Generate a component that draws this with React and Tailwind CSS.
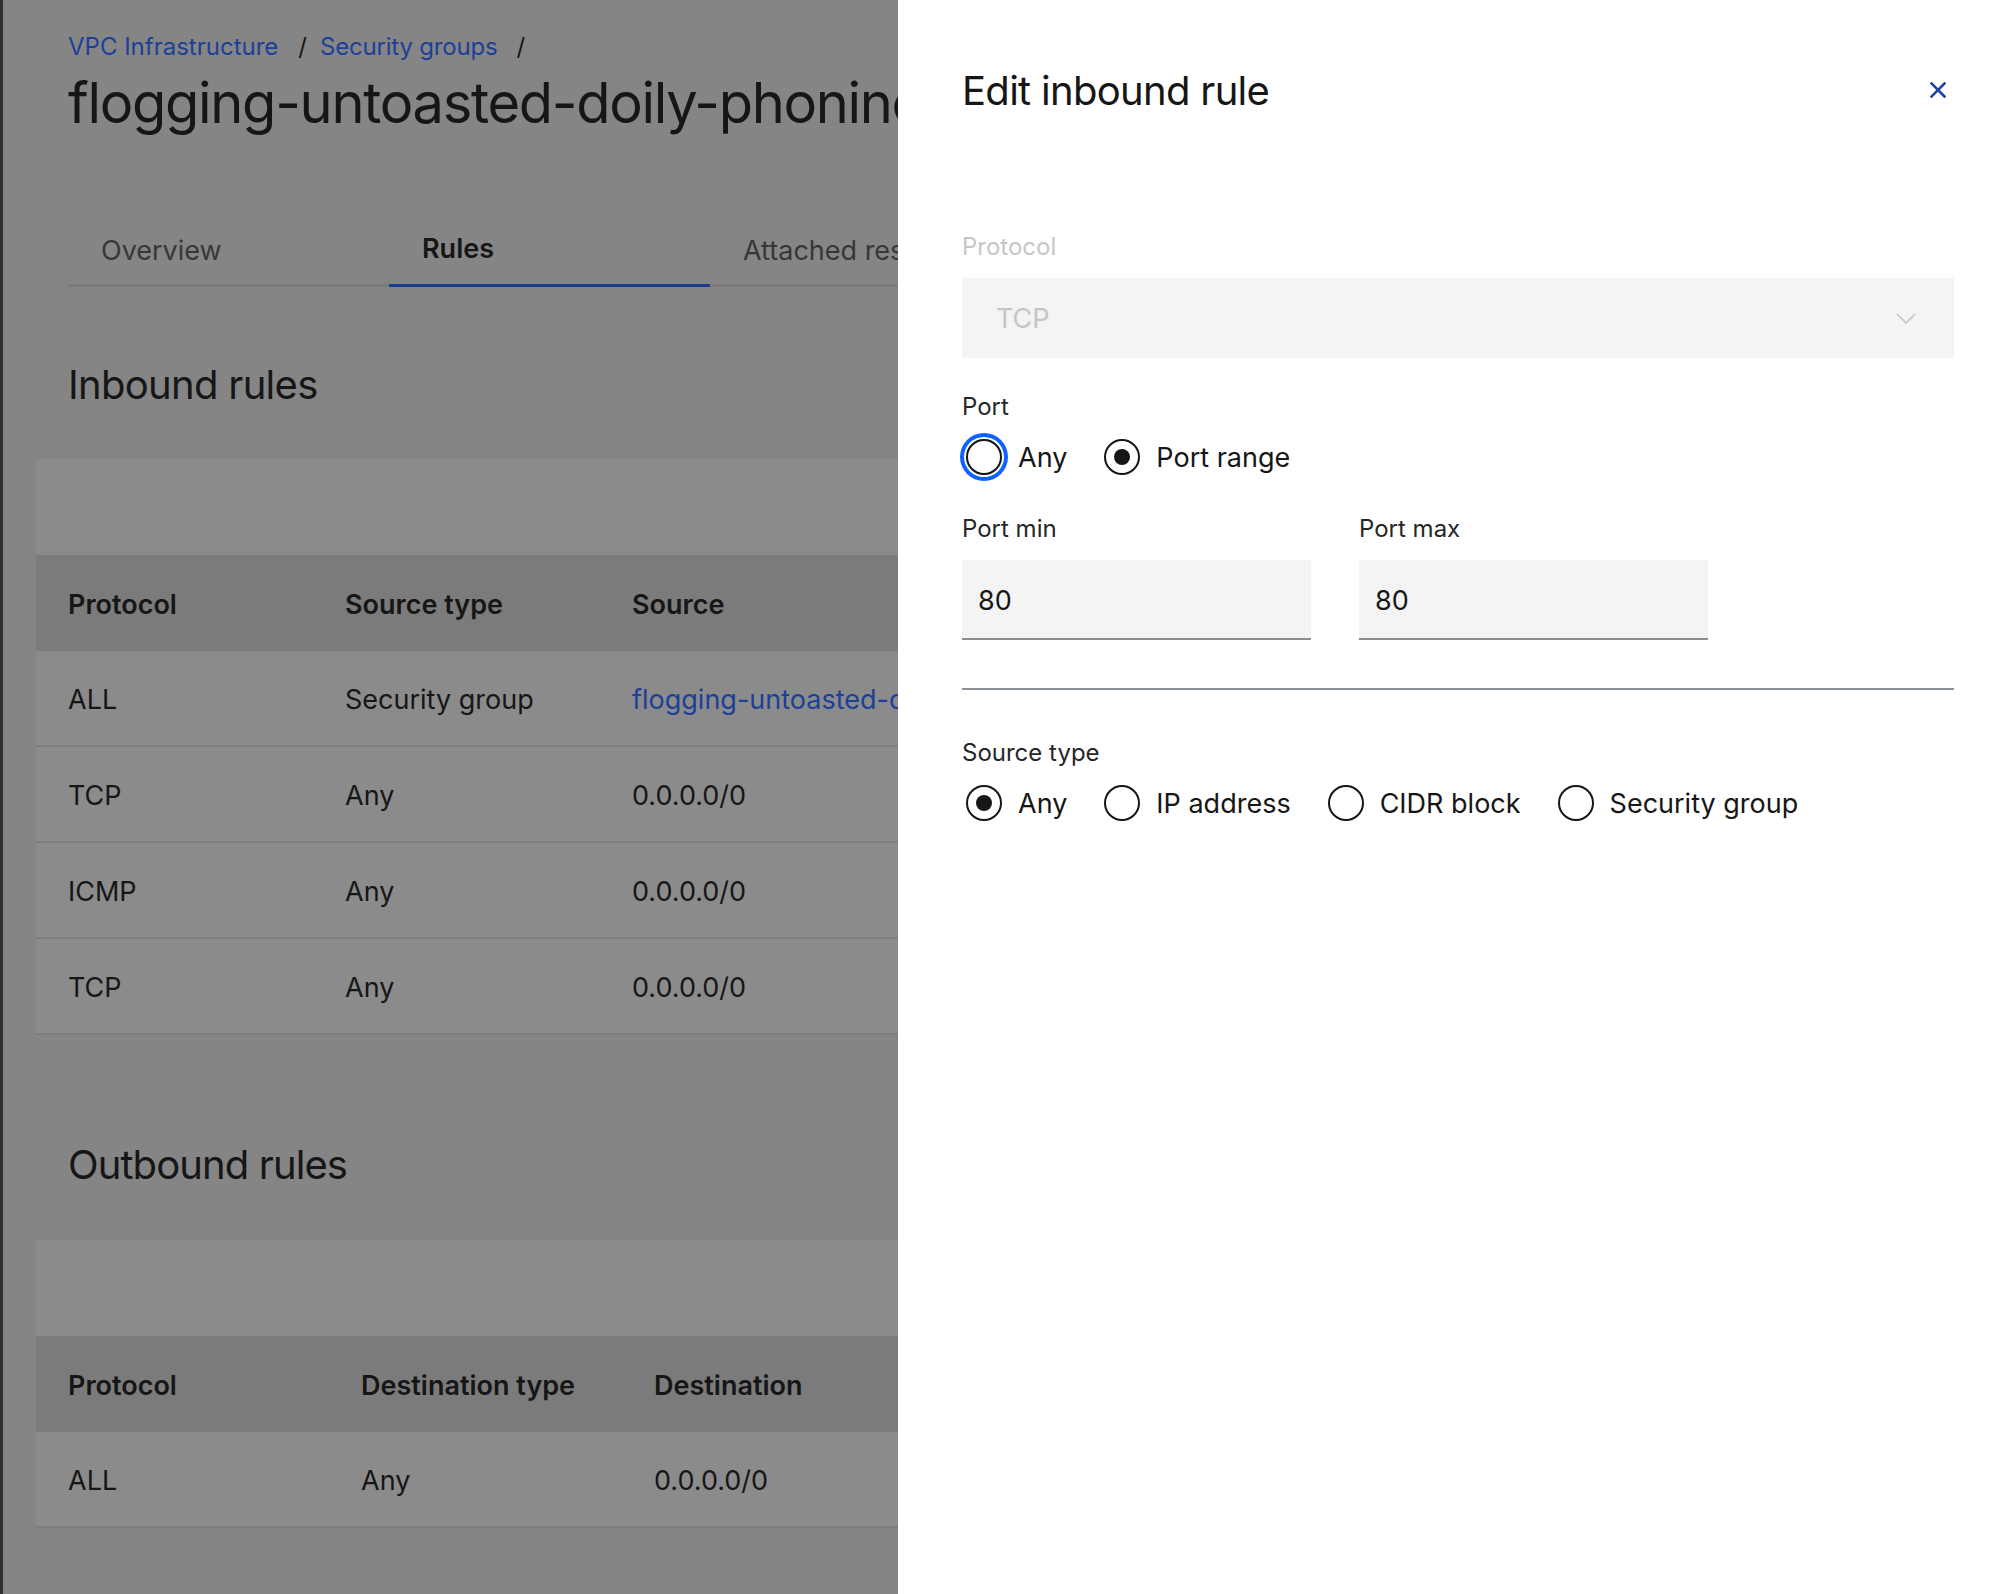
import React from "react";

function Radio({ checked, focused, label }) {
  return (
    <div className="flex items-center gap-[16px]">
      <div
        className={
          "w-[36px] h-[36px] rounded-full border-2 border-[#161616] flex items-center justify-center shrink-0 " +
          (focused ? "shadow-[0_0_0_2px_#ffffff,0_0_0_6px_#0f62fe]" : "")
        }
      >
        {checked && <div className="w-[16px] h-[16px] rounded-full bg-[#161616]" />}
      </div>
      <span className="text-[27px] leading-[36px] pt-[2px] text-[#161616]">{label}</span>
    </div>
  );
}

function Table({ cols, widths, rows }) {
  return (
    <div className="mt-[50px] ml-[-32px] w-[1400px]">
      <div className="h-[96px] bg-[#8b8b8b]" />
      <div className="h-[96px] bg-[#7b7b7b] flex items-center pt-[4px] text-[27px] font-semibold text-[#161616]">
        {cols.map((c, i) => (
          <div key={i} className="pl-[32px] shrink-0" style={{ width: widths[i] }}>
            {c}
          </div>
        ))}
      </div>
      {rows.map((r, ri) => (
        <div
          key={ri}
          className="h-[96px] bg-[#8b8b8b] border-b-2 border-[#7d7d7d] flex items-center pt-[4px] text-[27px] text-[#161616]"
        >
          {r.map((c, i) => (
            <div
              key={i}
              className={"pl-[32px] shrink-0 whitespace-nowrap " + (c.link ? "text-[#1d3f98]" : "")}
              style={{ width: widths[i] }}
            >
              {c.t}
            </div>
          ))}
        </div>
      ))}
    </div>
  );
}

export default function App() {
  return (
    <div className="relative w-[1998px] h-[1594px] overflow-hidden bg-[#858585] font-['Inter',sans-serif] text-[#161616]">
      <div className="flex h-full w-[898px] overflow-hidden">
        <div className="w-[3px] shrink-0 bg-[#2e2e2e]" />
        <div className="flex-1 pl-[65px] flex flex-col">
          <nav className="mt-[31px] h-[32px] flex items-center text-[24px] leading-[32px]">
            <span className="text-[#1d3f98]">VPC Infrastructure</span>
            <span className="ml-[20px] mr-[13px] text-[#161616]">/</span>
            <span className="text-[#1d3f98] tracking-[-0.2px]">Security groups</span>
            <span className="ml-[19px] text-[#161616]">/</span>
          </nav>
          <h1 className="mt-[8px] text-[56px] leading-[64px] font-normal whitespace-nowrap tracking-[-1.3px]">
            flogging-untoasted-doily-phonine-reclining
          </h1>
          <div className="mt-[82px] flex w-[1400px] border-b-[3px] border-[#7b7b7b] h-[70px]">
            <div className="w-[321px] h-[70px] pl-[33px] pb-[2px] flex items-center text-[27px] text-[#373737]">
              Overview
            </div>
            <div className="w-[321px] h-[70px] mb-[-3px] border-b-[3px] border-[#1b3c8f] pl-[33px] pb-[2px] flex items-center text-[27px] font-semibold">
              Rules
            </div>
            <div className="w-[321px] h-[70px] pl-[33px] pb-[2px] flex items-center text-[27px] text-[#373737] whitespace-nowrap">
              Attached resources
            </div>
          </div>
          <h2 className="mt-[74px] text-[40px] leading-[48px] font-normal tracking-[-0.7px]">Inbound rules</h2>
          <Table
            cols={["Protocol", "Source type", "Source", "Port"]}
            widths={[277, 287, 600, 300]}
            rows={[
              [{ t: "ALL" }, { t: "Security group" }, { t: "flogging-untoasted-doily-phonine", link: true }, { t: "-" }],
              [{ t: "TCP" }, { t: "Any" }, { t: "0.0.0.0/0" }, { t: "22" }],
              [{ t: "ICMP" }, { t: "Any" }, { t: "0.0.0.0/0" }, { t: "-" }],
              [{ t: "TCP" }, { t: "Any" }, { t: "0.0.0.0/0" }, { t: "80" }],
            ]}
          />
          <h2 className="mt-[106px] text-[40px] leading-[48px] font-normal tracking-[-0.9px]">Outbound rules</h2>
          <div className="mt-[1px]">
            <Table
              cols={["Protocol", "Destination type", "Destination", "Port"]}
              widths={[293, 293, 600, 300]}
              rows={[[{ t: "ALL" }, { t: "Any" }, { t: "0.0.0.0/0" }, { t: "-" }]]}
            />
          </div>
        </div>
      </div>

      <div className="absolute top-0 right-0 h-full w-[1100px] bg-white pl-[64px] pr-[44px] flex flex-col">
        <div className="pt-[67px]">
          <h3 className="text-[40px] leading-[48px] font-normal text-[#161616] tracking-[-0.7px]">Edit inbound rule</h3>
        </div>
        <button className="absolute top-[82px] right-[52px] w-[16px] h-[16px]">
          <svg width="16" height="16" viewBox="0 0 16 16">
            <path d="M1.5 1.5 L14.5 14.5 M14.5 1.5 L1.5 14.5" stroke="#1f44a8" strokeWidth="2.6" strokeLinecap="square" />
          </svg>
        </button>

        <div className="mt-[116px] text-[24px] leading-[32px] text-[#c6c6c6]">Protocol</div>
        <div className="mt-[15px] h-[80px] bg-[#f4f4f4] flex items-center justify-between pl-[34px] pr-[38px]">
          <span className="text-[27px] pt-[2px] text-[#c6c6c6]">TCP</span>
          <svg width="20" height="11" viewBox="0 0 20 11">
            <path d="M1 1 L10 10 L19 1" fill="none" stroke="#c6c6c6" strokeWidth="1.7" />
          </svg>
        </div>

        <div className="mt-[33px] text-[24px] leading-[32px] text-[#262626]">Port</div>
        <div className="mt-[16px] h-[36px] flex items-center gap-[37px] pl-[4px]">
          <Radio focused label="Any" />
          <Radio checked label="Port range" />
        </div>

        <div className="mt-[38px] flex gap-[48px]">
          <div className="w-[349px]">
            <div className="text-[24px] leading-[32px] text-[#262626]">Port min</div>
            <div className="mt-[15px] h-[80px] bg-[#f4f4f4] border-b-2 border-[#8d8d8d] flex items-center pl-[16px] pt-[4px] text-[27px]">
              80
            </div>
          </div>
          <div className="w-[349px]">
            <div className="text-[24px] leading-[32px] text-[#262626]">Port max</div>
            <div className="mt-[15px] h-[80px] bg-[#f4f4f4] border-b-2 border-[#8d8d8d] flex items-center pl-[16px] pt-[4px] text-[27px]">
              80
            </div>
          </div>
        </div>

        <div className="mt-[48px] h-[2px] bg-[#8b9199]" />

        <div className="mt-[47px] text-[24px] leading-[32px] text-[#262626]">Source type</div>
        <div className="mt-[16px] h-[36px] flex items-center gap-[37px] pl-[4px]">
          <Radio checked label="Any" />
          <Radio label="IP address" />
          <Radio label="CIDR block" />
          <Radio label="Security group" />
        </div>
      </div>
    </div>
  );
}
